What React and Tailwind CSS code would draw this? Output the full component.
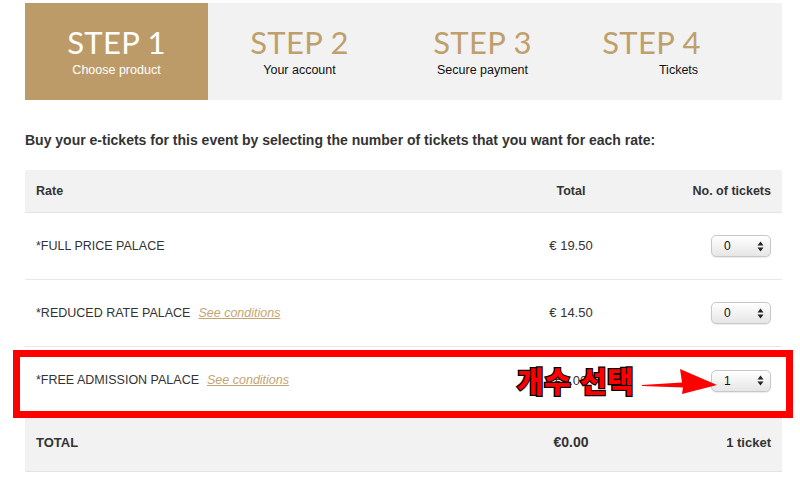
import React from "react";

const steps = [
  { t: "STEP 1", s: "Choose product", active: true, tc: "", sc: "" },
  { t: "STEP 2", s: "Your account", active: false, tc: "", sc: "" },
  { t: "STEP 3", s: "Secure payment", active: false, tc: "", sc: "" },
  { t: "STEP 4", s: "Tickets", active: false, tc: "pr-[28px]", sc: "pl-[26px]" },
];

function Select({ value }) {
  return (
    <div className="w-[60px] h-[22px] rounded-[5px] border border-[#c8c8c8] bg-gradient-to-b from-[#ffffff] to-[#e6e6e6] shadow-[0_1px_1px_rgba(0,0,0,0.08)] flex items-center justify-between pl-[12px] pr-[6px]">
      <span className="text-[12px] text-[#111]">{value}</span>
      <svg width="7" height="11" viewBox="0 0 7 11">
        <path d="M3.5 0.5 L6.5 4.5 L0.5 4.5 Z" fill="#222" />
        <path d="M3.5 10.5 L6.5 6.5 L0.5 6.5 Z" fill="#222" />
      </svg>
    </div>
  );
}

function Row({ name, cond, price, qty, border = true }) {
  return (
    <div className={`flex items-center h-[67px] ${border ? "border-b border-[#e8e8e8]" : ""}`}>
      <div className="flex-1 pl-[11px] flex items-center gap-[8px]">
        <span className="text-[12.5px] text-[#333]">{name}</span>
        {cond && (
          <span className="text-[12.5px] italic underline text-[#c4a574]">See conditions</span>
        )}
      </div>
      <div className="w-[100px] text-center text-[13px] text-[#333]">{price}</div>
      <div className="w-[161px] pr-[11px] flex justify-end">
        <Select value={qty} />
      </div>
    </div>
  );
}

export default function App() {
  return (
    <div
      className="w-[800px] h-[488px] bg-white overflow-hidden relative"
      style={{ fontFamily: '"Liberation Sans", Arial, sans-serif' }}
    >
      <div className="pt-[3px] px-[25px] w-[782px]">
        <div className="flex h-[97px] bg-[#f2f2f2] w-[757px]">
          {steps.map((st) => (
            <div
              key={st.t}
              className={`w-[183px] flex flex-col items-center pt-[22px] ${st.active ? "bg-[#bd9b68]" : ""}`}
            >
              <div
                className={`text-[31px] leading-[34px] tracking-[0.01em] ${st.tc} ${st.active ? "text-white" : "text-[#bf9f6c]"}`}
                style={{ fontFamily: 'Lato, "DejaVu Sans", sans-serif' }}
              >
                {st.t}
              </div>
              <div
                className={`mt-[3px] text-[12.5px] leading-[16px] ${st.sc} ${st.active ? "text-white" : "text-[#111]"}`}
              >
                {st.s}
              </div>
            </div>
          ))}
        </div>

        <div className="mt-[31px] h-[18px] text-[14px] leading-[18px] font-bold text-[#333]">
          Buy your e-tickets for this event by selecting the number of tickets that you want for each rate:
        </div>

        <div className="mt-[21px] w-[757px]">
          <div className="flex items-center h-[43px] bg-[#f2f2f2] border-b border-[#e4e4e4] font-bold text-[12.5px] text-[#333]">
            <div className="flex-1 pl-[11px]">Rate</div>
            <div className="w-[100px] text-center">Total</div>
            <div className="w-[161px] pr-[11px] text-right">No. of tickets</div>
          </div>
          <Row name="*FULL PRICE PALACE" price="€ 19.50" qty="0" />
          <Row name="*REDUCED RATE PALACE" cond price="€ 14.50" qty="0" />
          <Row name="*FREE ADMISSION PALACE" cond price="€0.00" qty="1" border={false} />
          <div className="flex items-center h-[58px] bg-[#f2f2f2] border-b border-[#e4e4e4] font-bold text-[13px] text-[#333]">
            <div className="flex-1 pl-[11px]">TOTAL</div>
            <div className="w-[100px] text-center text-[14px]">€0.00</div>
            <div className="w-[161px] pr-[11px] text-right">1 ticket</div>
          </div>
        </div>
      </div>

      <div className="absolute left-[13px] top-[350px] w-[780px] h-[68px] border-[7px] border-[#ff0000] pointer-events-none">
        <div
          className="absolute left-[497px] top-[4px] flex gap-[9px] text-[29px] leading-[38px] font-black text-[#ff0000] tracking-[0.01em]"
          style={{
            fontFamily: '"Noto Sans CJK KR", sans-serif',
            WebkitTextStroke: "2.5px #000",
            paintOrder: "stroke fill",
          }}
        >
          <span>개수</span>
          <span>선택</span>
        </div>
        <svg className="absolute left-[622px] top-[8px]" width="76" height="30" viewBox="0 0 76 30">
          <path d="M0 20 L40 17.5 L38 4 L75 20 L40 29 L41 22.5 L0 21 Z" fill="#ff0000" />
        </svg>
      </div>
    </div>
  );
}
